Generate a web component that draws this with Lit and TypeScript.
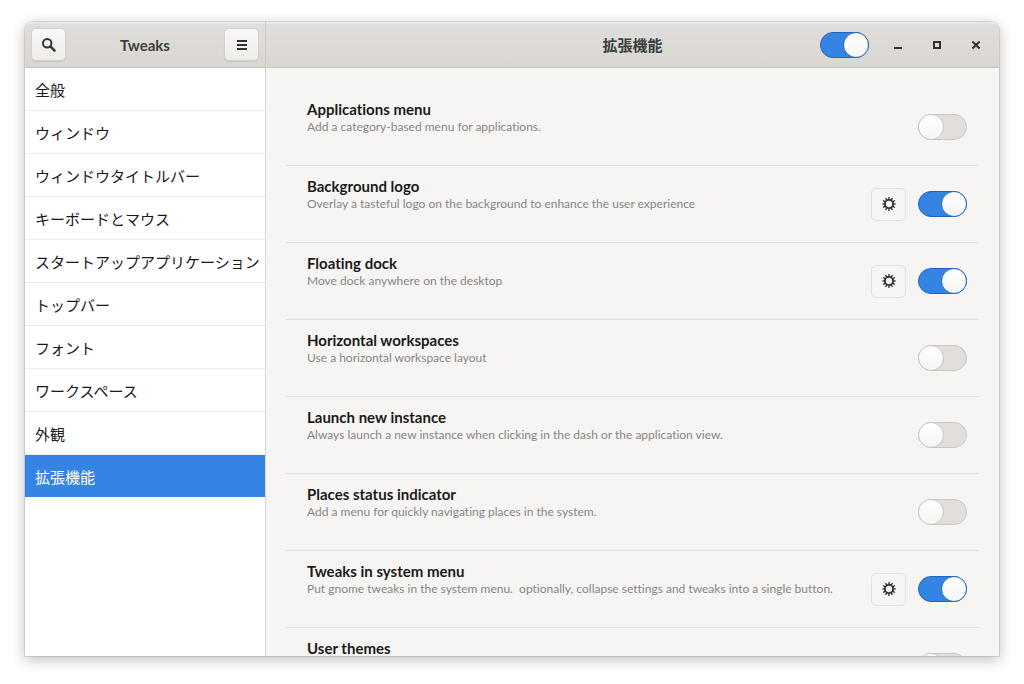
import { LitElement, html, css, svg, nothing } from "lit";
import { customElement, property, state } from "lit/decorators.js";
import { classMap } from "lit/directives/class-map.js";

interface Extension {
  id: string;
  name: string;
  description: string;
  enabled: boolean;
  settings?: boolean;
}

const sections = [
  "全般",
  "ウィンドウ",
  "ウィンドウタイトルバー",
  "キーボードとマウス",
  "スタートアップアプリケーション",
  "トップバー",
  "フォント",
  "ワークスペース",
  "外観",
  "拡張機能",
];

const initialExtensions: Extension[] = [
  { id: "apps-menu", name: "Applications menu", description: "Add a category-based menu for applications.", enabled: false },
  { id: "background-logo", name: "Background logo", description: "Overlay a tasteful logo on the background to enhance the user experience", enabled: true, settings: true },
  { id: "floating-dock", name: "Floating dock", description: "Move dock anywhere on the desktop", enabled: true, settings: true },
  { id: "horizontal-workspaces", name: "Horizontal workspaces", description: "Use a horizontal workspace layout", enabled: false },
  { id: "launch-new-instance", name: "Launch new instance", description: "Always launch a new instance when clicking in the dash or the application view.", enabled: false },
  { id: "places-menu", name: "Places status indicator", description: "Add a menu for quickly navigating places in the system.", enabled: false },
  { id: "tweaks-system-menu", name: "Tweaks in system menu", description: "Put gnome tweaks in the system menu.\u00a0 optionally, collapse settings and tweaks into a single button.", enabled: true, settings: true },
  { id: "user-theme", name: "User themes", description: "", enabled: false },
];

const gearTeeth = Array.from({ length: 12 }, (_, i) => i * 30);

const icons = {
  search: svg`<circle cx="6.2" cy="6.2" r="4.2" fill="none" stroke="currentColor" stroke-width="2"/><path d="M9.4 9.4 13.6 13.6" stroke="currentColor" stroke-width="2.4" stroke-linecap="round"/>`,
  menu: svg`<path d="M3 3h10v2H3zM3 7h10v2H3zM3 11h10v2H3z" fill="currentColor"/>`,
  gear: svg`<circle cx="8" cy="8" r="4.1" fill="none" stroke="currentColor" stroke-width="1.9"/>${gearTeeth.map(
    (a) => svg`<path d="M7.2 3.8 7.4 1.1h1.2l.2 2.7z" fill="currentColor" transform=${`rotate(${a} 8 8)`}/>`
  )}`,
  minimize: svg`<path d="M4 10h8v2H4z" fill="currentColor"/>`,
  maximize: svg`<path d="M4 4h8v8H4zM6 6v4h4V6z" fill="currentColor" fill-rule="evenodd"/>`,
  close: svg`<path d="M4.4 4.4 11.6 11.6M11.6 4.4 4.4 11.6" stroke="currentColor" stroke-width="2.1"/>`,
};

const icon = (name: keyof typeof icons) =>
  html`<svg class="icon" viewBox="0 0 16 16" width="16" height="16" aria-hidden="true">${icons[name]}</svg>`;

@customElement("toggle-switch")
class ToggleSwitch extends LitElement {
  @property() label = "";
  @property({ type: Boolean }) checked = false;

  static styles = css`
    :host {
      display: block;
      flex: none;
    }
    .switch {
      appearance: none;
      display: flex;
      box-sizing: border-box;
      width: 49px;
      height: 26px;
      margin: 0;
      border: 1px solid #cdc7c2;
      border-radius: 13px;
      background: #e1dedb;
    }
    .switch::before {
      content: "";
      box-sizing: border-box;
      width: 26px;
      height: 26px;
      margin: -1px;
      border: 1px solid #cdc7c2;
      border-radius: 50%;
      background: linear-gradient(#ffffff, #f6f5f4);
    }
    .switch:checked {
      justify-content: flex-end;
      border-color: #2065bb;
      background: #3584e4;
    }
    .switch:checked::before {
      border-color: #2a6fc6;
    }
  `;

  render() {
    return html`<input
      class="switch"
      type="checkbox"
      role="switch"
      aria-label=${this.label}
      .checked=${this.checked}
      @change=${(e: Event) => (this.checked = (e.target as HTMLInputElement).checked)}
    />`;
  }
}

@customElement("app-root")
class AppRoot extends LitElement {
  @state() private current = sections.length - 1;
  private extensions = initialExtensions;

  static styles = css`
    :host {
      display: block;
      box-sizing: border-box;
      height: 100vh;
      padding: 22px 25px 28px;
      background: #ffffff;
      color: #1a1a1a;
      font-family: Lato, "Noto Sans CJK JP", sans-serif;
      font-size: 15px;
      font-variant-ligatures: none;
    }
    * {
      box-sizing: border-box;
    }
    .window {
      display: grid;
      grid-template-columns: 241px 1fr;
      grid-template-rows: 46px 1fr;
      height: 100%;
      overflow: hidden;
      border-radius: 8px 8px 0 0;
      background: #f6f5f4;
      box-shadow: 0 0 0 1px rgba(0, 0, 0, 0.1), 0 3px 14px 1px rgba(0, 0, 0, 0.24);
    }
    .header {
      display: grid;
      grid-template-columns: 1fr auto 1fr;
      align-items: center;
      padding: 0 6px;
      border-bottom: 1px solid #c8c2bc;
      background: linear-gradient(#e1dedb, #dad6d2);
      box-shadow: inset 0 2px #eae8e6;
      color: #2e3436;
    }
    .header.side {
      border-right: 1px solid #cfcac5;
    }
    .title {
      margin: 0;
      font-size: 15px;
      font-weight: 700;
      line-height: 20px;
      color: #3a3f41;
    }
    .tools {
      display: flex;
      align-items: center;
      justify-content: flex-end;
      gap: 9px;
    }
    .button {
      display: flex;
      align-items: center;
      justify-content: center;
      width: 35px;
      height: 33px;
      padding: 0;
      border: 1px solid #d5d0cc;
      border-radius: 5px;
      background: linear-gradient(#f8f7f6, #efedeb);
      color: #2e3436;
    }
    .raised {
      box-shadow: 0 1px 1px rgba(0, 0, 0, 0.08);
    }
    .flat {
      border-color: #e3e0dd;
      background: #f6f5f4;
    }
    .window-button {
      width: 30px;
      border: 0;
      background: none;
    }
    .window-controls {
      display: flex;
      gap: 9px;
      padding: 0 2px 0 5px;
    }
    .icon {
      display: block;
    }
    .sidebar {
      overflow: hidden;
      border-right: 1px solid #d9d6d3;
      background: #ffffff;
    }
    .section {
      display: block;
      height: 43px;
      padding: 0 10px;
      border-bottom: 1px solid #ebebeb;
      line-height: 44px;
      white-space: nowrap;
      color: #1a1a1a;
      text-decoration: none;
    }
    .section.selected {
      border-bottom-color: #ffffff;
      background: #3584e4;
      background-clip: padding-box;
      color: #ffffff;
    }
    .content {
      overflow: hidden;
      padding: 21px 20px 0;
    }
    .extensions {
      margin: 0;
      padding: 0;
      list-style: none;
    }
    .extension {
      display: flex;
      align-items: center;
      gap: 12px;
      height: 77px;
      padding: 0 12px 0 21px;
      border-bottom: 1px solid #e1dedb;
    }
    .text {
      flex: 1;
      min-width: 0;
      align-self: flex-start;
      padding-top: 11px;
      white-space: nowrap;
    }
    .name {
      margin: 0;
      font-size: 15px;
      font-weight: 700;
      line-height: 18px;
    }
    .description {
      margin: 0;
      font-size: 12px;
      line-height: 18px;
      color: #868686;
    }
  `;

  private select(e: Event, index: number) {
    e.preventDefault();
    this.current = index;
  }

  render() {
    return html`
      <div class="window">
        <header class="header side">
          <button class="button raised" aria-label="検索">${icon("search")}</button>
          <h1 class="title">Tweaks</h1>
          <div class="tools">
            <button class="button raised" aria-label="メニュー">${icon("menu")}</button>
          </div>
        </header>
        <header class="header">
          <span></span>
          <h2 class="title">${sections[this.current]}</h2>
          <div class="tools">
            <toggle-switch label="拡張機能" checked></toggle-switch>
            <div class="window-controls">
              <button class="button window-button" aria-label="最小化">${icon("minimize")}</button>
              <button class="button window-button" aria-label="最大化">${icon("maximize")}</button>
              <button class="button window-button" aria-label="閉じる">${icon("close")}</button>
            </div>
          </div>
        </header>
        <nav class="sidebar">
          ${sections.map(
            (name, i) => html`<a
              class=${classMap({ section: true, selected: i === this.current })}
              href="#"
              @click=${(e: Event) => this.select(e, i)}
              >${name}</a
            >`
          )}
        </nav>
        <main class="content">
          <ul class="extensions">
            ${this.extensions.map(
              (x) => html`<li class="extension">
                <div class="text">
                  <h3 class="name">${x.name}</h3>
                  ${x.description ? html`<p class="description">${x.description}</p>` : nothing}
                </div>
                ${x.settings
                  ? html`<button class="button flat" aria-label=${`${x.name} の設定`}>${icon("gear")}</button>`
                  : nothing}
                <toggle-switch label=${x.name} ?checked=${x.enabled}></toggle-switch>
              </li>`
            )}
          </ul>
        </main>
      </div>
    `;
  }
}
